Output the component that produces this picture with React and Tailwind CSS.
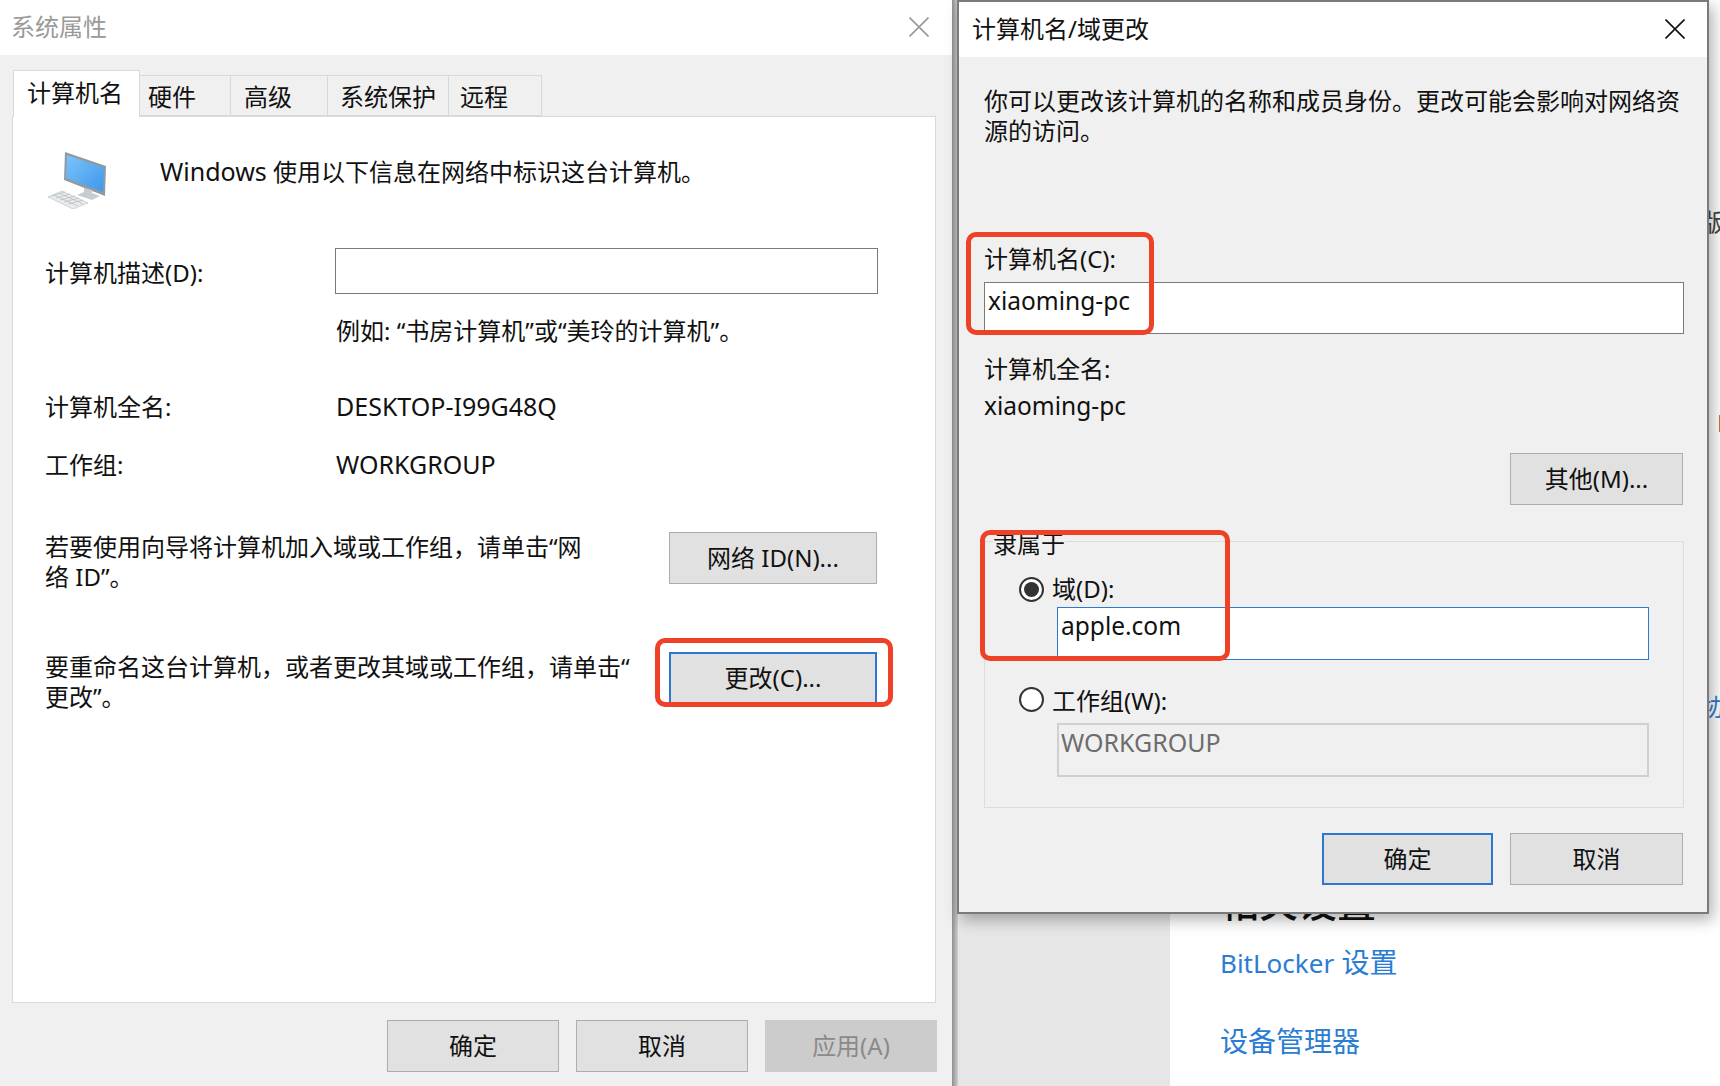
const Btn = ({ w = 'w-[172px]', className = 'border-[#adadad] bg-[#e1e1e1]', children }) => (
  <div className={`${w} h-[52px] shrink-0 flex items-center justify-center border ${className}`}>
    {children}
  </div>
);

const Radio = ({ checked }) => (
  <div className="w-[25px] h-[25px] shrink-0 rounded-full border-2 border-[#333333] bg-white flex items-center justify-center">
    {checked && <div className="w-[15px] h-[15px] rounded-full bg-[#333333]" />}
  </div>
);

const CloseIcon = ({ className }) => (
  <svg viewBox="0 0 20 20" className={className} fill="none" stroke="currentColor" strokeWidth="1.6">
    <path d="M0.5 0.5 L19.5 19.5 M19.5 0.5 L0.5 19.5" />
  </svg>
);

const ComputerIcon = () => (
  <svg viewBox="0 0 60 58" className="w-[60px] h-[58px] ml-[3px] shrink-0">
    <defs>
      <linearGradient id="screen" x1="0" y1="0" x2="1" y2="1">
        <stop offset="0" stopColor="#7cc4fa" />
        <stop offset="1" stopColor="#3d97ea" />
      </linearGradient>
    </defs>
    <polygon points="17,1 58,15 57,45 16,29" fill="#8f9aa3" />
    <polygon points="19,4 56,17 55,41 18,27" fill="url(#screen)" />
    <polygon points="36,37 44,39 44,42 52,45 44,49 29,44 36,41" fill="#c6ccd1" />
    <polygon points="0,46 14,40 40,52 25,58" fill="#e9ecee" stroke="#a9b0b5" strokeWidth="0.5" />
    <path d="M4 45 L17 41 M8 47 L22 43 M12 49 L27 45 M16 51 L31 47 M20 53 L35 49 M6 44 L30 55 M11 42 L35 53" stroke="#aab1b6" strokeWidth="0.6" />
  </svg>
);

const tabs = [
  { label: '硬件', w: 'w-[91px]', pl: 'pl-[8px]' },
  { label: '高级', w: 'w-[97px]', pl: 'pl-[13px]' },
  { label: '系统保护', w: 'w-[121px]', pl: 'pl-[12px]' },
  { label: '远程', w: 'w-[93px]', pl: 'pl-[11px]' },
];

const SystemProperties = () => (
  <div className="w-[952px] h-[1086px] shrink-0 flex flex-col bg-[#f0f0f0]">
    <div className="h-[55px] shrink-0 bg-white flex items-center justify-between pl-[11px] pr-[23px] pb-[2px]">
      <span className="text-[#9a9a9a]">系统属性</span>
      <CloseIcon className="w-[20px] h-[20px] text-[#999999]" />
    </div>

    <div className="h-[61px] shrink-0 flex items-end pl-[13px]">
      <div className="w-[127px] h-[47px] -mb-px relative z-10 bg-white border border-b-0 border-[#d9d9d9] pl-[13px] pt-[7px]">
        计算机名
      </div>
      {tabs.map((t) => (
        <div key={t.label} className={`${t.w} ${t.pl} h-[41px] pt-[6px] border border-l-0 border-[#d9d9d9] bg-[#f0f0f0]`}>
          {t.label}
        </div>
      ))}
    </div>

    <div className="ml-[12px] w-[924px] h-[887px] shrink-0 bg-white border border-[#d9d9d9] pl-[32px] flex flex-col">
      <div className="mt-[34px] flex h-[58px]">
        <ComputerIcon />
        <span className="ml-[52px] mt-[5px] h-[30px]"><span className="text-[25px]">Windows</span> 使用以下信息在网络中标识这台计算机。</span>
      </div>
      <div className="mt-[39px] flex items-center h-[46px]">
        <span className="w-[290px] mt-[4px]">计算机描述(D):</span>
        <div className="w-[543px] h-[46px] bg-white border border-[#7a7a7a]" />
      </div>
      <div className="mt-[22px] pl-[291px]">例如: “书房计算机”或“美玲的计算机”。</div>
      <div className="mt-[46px] flex">
        <span className="w-[291px]">计算机全名:</span>
        <span className="text-[25px] -mt-px">DESKTOP-I99G48Q</span>
      </div>
      <div className="mt-[28px] flex">
        <span className="w-[291px]">工作组:</span>
        <span className="text-[25px] -mt-px">WORKGROUP</span>
      </div>
      <div className="mt-[52px] flex">
        <span className="w-[624px]">若要使用向导将计算机加入域或工作组，请单击“网<br />络 ID”。</span>
        <Btn w="w-[208px]" className="border-[#adadad] bg-[#e1e1e1]"><span>网络 ID(N)...</span></Btn>
      </div>
      <div className="mt-[60px] flex">
        <span className="w-[624px]">要重命名这台计算机，或者更改其域或工作组，请单击“<br />更改”。</span>
        <Btn w="w-[208px]" className="border-2 border-[#2e77d0] bg-[#e1e1e1]"><span>更改(C)...</span></Btn>
      </div>
    </div>

    <div className="mt-[17px] flex justify-end gap-[17px] pr-[15px]">
      <Btn>确定</Btn>
      <Btn>取消</Btn>
      <Btn className="border-[#cccccc] bg-[#cccccc] text-[#8a8a8a]">应用(A)</Btn>
    </div>
  </div>
);

const NameChangeDialog = () => (
  <div className="absolute left-[957px] top-0 w-[752px] h-[914px] flex flex-col bg-[#f0f0f0] border-2 border-[#7a7a7a] shadow-[4px_6px_14px_rgba(0,0,0,0.3)]">
    <div className="h-[55px] shrink-0 bg-white flex items-center justify-between pl-[13px] pr-[22px] pb-[2px]">
      <span className="text-[#111111]">计算机名/域更改</span>
      <CloseIcon className="w-[20px] h-[20px] text-[#111111]" />
    </div>

    <div className="pl-[25px] pr-[24px] flex flex-col">
      <p className="mt-[29px]">你可以更改该计算机的名称和成员身份。更改可能会影响对网络资<br />源的访问。</p>
      <div className="mt-[98px]">计算机名(C):</div>
      <div className="mt-[8px] w-[700px] h-[52px] bg-white border border-[#7a7a7a] pl-[3px] pt-[3px] text-[24.5px]">xiaoming-pc</div>
      <div className="mt-[20px]">计算机全名:</div>
      <div className="mt-[7px] text-[24.5px]">xiaoming-pc</div>
      <div className="mt-[32px] flex justify-end pr-[1px] w-[700px]">
        <Btn w="w-[173px]">其他(M)...</Btn>
      </div>

      <fieldset className="relative mt-[36px] w-[700px] h-[267px] border border-[#dcdcdc] pl-[46px]">
        <div className="absolute left-[8px] -top-[13px] bg-[#f0f0f0]">隶属于</div>
        <div className="absolute left-[34px] top-[35px]"><Radio checked /></div>
        <div className="pt-[32px] pl-[21px]">域(D):</div>
        <div className="mt-[3px] ml-[26px] w-[592px] h-[53px] bg-white border border-[#2e7ad1] pl-[3px] pt-[3px] text-[24.5px]">apple.com</div>
        <div className="absolute left-[34px] top-[145px]"><Radio /></div>
        <div className="mt-[26px] pl-[21px]">工作组(W):</div>
        <div className="mt-[7px] ml-[26px] w-[592px] h-[54px] border-2 border-[#d0d0d0] pl-[2px] pt-[2px] text-[#6d6d6d] text-[25px]">WORKGROUP</div>
      </fieldset>

      <div className="mt-[25px] w-[700px] flex justify-end gap-[17px] pr-[1px]">
        <Btn w="w-[171px]" className="border-2 border-[#2e77d0] bg-[#e1e1e1]">确定</Btn>
        <Btn w="w-[173px]">取消</Btn>
      </div>
    </div>
  </div>
);

export default function App() {
  return (
    <div className="relative w-[1720px] h-[1086px] overflow-hidden flex bg-white text-[#111111] text-[24px] leading-[30px] font-['Noto_Sans','Noto_Sans_CJK_SC',sans-serif]">
      <SystemProperties />

      {/* settings window behind the dialogs */}
      <div className="w-[6px] shrink-0 bg-gradient-to-r from-[#8f8f8f] to-[#cfcfcf]" />
      <div className="w-[212px] shrink-0 bg-[#e6e6e6]" />
      <div className="flex-1 relative pl-[50px] pt-[882px]">
        <div className="text-[39px] leading-[40px] font-medium">相关设置</div>
        <div className="mt-[20px] text-[28px] leading-[40px] text-[#2b7cd3]"><span className="text-[26px]">BitLocker</span> 设置</div>
        <div className="mt-[38px] text-[28px] leading-[40px] text-[#2b7cd3]">设备管理器</div>
        <span className="absolute left-[532px] top-[207px] text-[#444444]">版</span>
        <span className="absolute left-[547px] top-[408px] text-[#444444]">E</span>
        <span className="absolute left-[532px] top-[692px] text-[#2b7cd3]">协</span>
      </div>

      <NameChangeDialog />

      {/* red annotation boxes */}
      <div className="absolute left-[655px] top-[638px] w-[238px] h-[69px] rounded-[10px] border-[5px] border-[#ee4128]" />
      <div className="absolute left-[966px] top-[232px] w-[188px] h-[103px] rounded-[10px] border-[5px] border-[#ee4128]" />
      <div className="absolute left-[980px] top-[530px] w-[250px] h-[131px] rounded-[10px] border-[5px] border-[#ee4128]" />
    </div>
  );
}
